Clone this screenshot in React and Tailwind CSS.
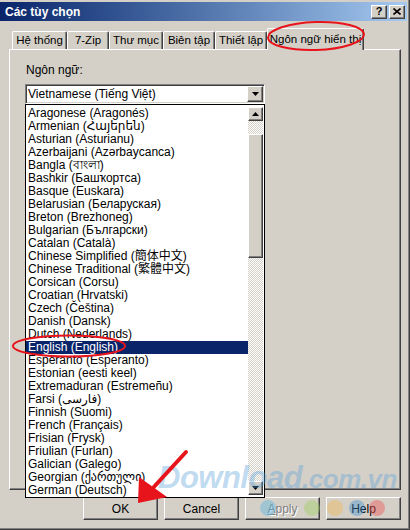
import React from "react";

const raised =
  "border border-t-white border-l-white border-r-[#404040] border-b-[#404040] shadow-[inset_-1px_-1px_#808080] bg-[#d4d0c8]";

const langs = [
  "Aragonese (Aragonés)",
  "Armenian (Հայերեն)",
  "Asturian (Asturianu)",
  "Azerbaijani (Azərbaycanca)",
  "Bangla (বাংলা)",
  "Bashkir (Башҡортса)",
  "Basque (Euskara)",
  "Belarusian (Беларуская)",
  "Breton (Brezhoneg)",
  "Bulgarian (Български)",
  "Catalan (Català)",
  "Chinese Simplified (簡体中文)",
  "Chinese Traditional (繁體中文)",
  "Corsican (Corsu)",
  "Croatian (Hrvatski)",
  "Czech (Čeština)",
  "Danish (Dansk)",
  "Dutch (Nederlands)",
  "English (English)",
  "Esperanto (Esperanto)",
  "Estonian (eesti keel)",
  "Extremaduran (Estremeñu)",
  "Farsi (فارسی)",
  "Finnish (Suomi)",
  "French (Français)",
  "Frisian (Frysk)",
  "Friulian (Furlan)",
  "Galician (Galego)",
  "Georgian (ქართული)",
  "German (Deutsch)",
];

const tabs = [
  { label: "Hệ thống", w: "w-[55px]" },
  { label: "7-Zip", w: "w-[42px]" },
  { label: "Thư mục", w: "w-[54px]" },
  { label: "Biên tập", w: "w-[52px]" },
  { label: "Thiết lập", w: "w-[52px]" },
];

const Arrow = ({ up }) => (
  <svg width="7" height="4" viewBox="0 0 7 4">
    {up ? (
      <polygon points="3.5,0 7,4 0,4" fill="#000" />
    ) : (
      <polygon points="0,0 7,0 3.5,4" fill="#000" />
    )}
  </svg>
);

const checker =
  "bg-[repeating-conic-gradient(#d4d0c8_0%_25%,#ffffff_0%_50%)] bg-[length:2px_2px]";

export default function App() {
  return (
    <div className="relative w-[410px] h-[530px] overflow-hidden bg-[#d4d0c8] pt-[2px] pr-[2px] border-r border-b border-[#404040] shadow-[inset_-1px_-1px_#808080] flex flex-col font-['Liberation_Sans','Noto_Sans_CJK_JP','DejaVu_Sans',sans-serif] text-[12px] text-black">
      {/* title bar */}
      <div className="h-[19px] flex items-center justify-between bg-linear-to-r from-[#0a246a] to-[#a6caf0] pl-[5px] pr-[2px]">
        <span className="text-white font-bold text-[12px] leading-none">Các tùy chọn</span>
        <div className="flex gap-[2px]">
          <div className={`${raised} w-[16px] h-[14px] flex items-center justify-center font-bold text-[11px] leading-none`}>?</div>
          <div className={`${raised} w-[16px] h-[14px] flex items-center justify-center`}>
            <svg width="8" height="7" viewBox="0 0 8 7">
              <path d="M0.5 0.5 L7.5 6.5 M7.5 0.5 L0.5 6.5" stroke="#000" strokeWidth="1.6" />
            </svg>
          </div>
        </div>
      </div>

      {/* tabs */}
      <div className="mt-[7px] h-[21px] pl-[12px] flex items-end text-[11.5px]">
        {tabs.map((t) => (
          <div
            key={t.label}
            className={`${t.w} h-[18px] border-t border-l border-white border-r border-r-[#404040] shadow-[inset_-1px_0_#808080] rounded-t-[2px] flex items-center justify-center leading-none`}
          >
            {t.label}
          </div>
        ))}
        <div className="relative z-10 w-[97px] h-[22px] -mb-px bg-[#d4d0c8] border-t border-l border-white border-r border-r-[#404040] shadow-[inset_-1px_0_#808080] rounded-t-[2px] flex items-center justify-center leading-none">
          Ngôn ngữ hiển thị
        </div>
      </div>

      {/* panel */}
      <div className="ml-[9px] w-[392px] h-[441px] border-t border-l border-white border-r border-b border-r-[#404040] border-b-[#404040] shadow-[inset_-1px_-1px_#808080] pt-[14px] pl-[15px]">
        <div className="ml-[1px] leading-[13px]">Ngôn ngữ:</div>
        <div className="relative mt-[7px] w-[240px] h-[20px] bg-white border border-t-[#808080] border-l-[#808080] border-r-white border-b-white shadow-[inset_1px_1px_#404040,inset_-1px_-1px_#d4d0c8] flex items-center p-[1px]">
          <span className="flex-1 pl-[1px] leading-none">Vietnamese (Tiếng Việt)</span>
          <div className={`${raised} w-[16px] h-[16px] flex items-center justify-center`}>
            <Arrow />
          </div>

          {/* open dropdown list */}
          <div className="absolute left-[-1px] top-[19px] z-20 w-[240px] h-[394px] bg-white border border-black flex overflow-hidden">
            <div className="flex-1 pt-[2px]">
              {langs.map((l) => (
                <div
                  key={l}
                  className={`h-[13px] leading-[13px] pl-[2px] whitespace-nowrap ${
                    l.startsWith("English") ? "bg-[#0a246a] text-white" : ""
                  }`}
                >
                  {l}
                </div>
              ))}
            </div>
            <div className="w-[15px] my-[2px] mr-px flex flex-col">
              <div className={`${raised} h-[14px] flex items-center justify-center`}>
                <Arrow up />
              </div>
              <div className={`${checker} h-[13px]`} />
              <div className={`${raised} h-[124px]`} />
              <div className={`${checker} flex-1`} />
              <div className={`${raised} h-[14px] flex items-center justify-center`}>
                <Arrow />
              </div>
            </div>
          </div>
        </div>
      </div>

      {/* buttons */}
      <div className="mt-[7px] pl-[83px] flex gap-[6px]">
        <div className={`${raised} w-[75px] h-[23px] flex items-center justify-center`}>OK</div>
        <div className={`${raised} w-[75px] h-[23px] flex items-center justify-center`}>Cancel</div>
        <div className={`${raised} w-[75px] h-[23px] flex items-center justify-center text-[#808080] [text-shadow:1px_1px_#ffffff]`}>
          <span><span className="underline">A</span>pply</span>
        </div>
        <div className={`${raised} w-[75px] h-[23px] flex items-center justify-center`}>Help</div>
      </div>

      {/* watermark */}
      <div className="absolute left-[158px] top-[462px] z-30 pointer-events-none italic font-bold text-[31px] leading-none tracking-[-0.5px] text-[#5aa0d8]/40">
        Download<span className="text-[26px]">.com.vn</span>
      </div>
      <div className="absolute left-[260px] top-[500px] z-30 w-[16px] h-[16px] rounded-full bg-[#4fb3e0]/40" />
      <div className="absolute left-[304px] top-[500px] z-30 w-[16px] h-[16px] rounded-full bg-[#9ccf5a]/40" />
      <div className="absolute left-[327px] top-[500px] z-30 w-[16px] h-[16px] rounded-full bg-[#f3b44a]/40" />
      <div className="absolute left-[349px] top-[500px] z-30 w-[16px] h-[16px] rounded-full bg-[#3d8fd1]/40" />
      <div className="absolute left-[369px] top-[500px] z-30 w-[16px] h-[16px] rounded-full bg-[#ef5a5a]/45" />

      {/* annotations */}
      <svg className="absolute left-0 top-0 z-40 pointer-events-none" width="410" height="530" viewBox="0 0 410 530">
        <ellipse cx="316" cy="36" rx="48" ry="14" fill="none" stroke="#e8141c" strokeWidth="2" transform="rotate(-2 316 36)" />
        <ellipse cx="69" cy="346" rx="56" ry="10.5" fill="none" stroke="#e8141c" strokeWidth="2" />
        <line x1="186" y1="452" x2="152" y2="489" stroke="#e8141c" strokeWidth="4" strokeLinecap="round" />
        <polygon points="139,477 167,497 138,503" fill="#e8141c" />
      </svg>
    </div>
  );
}
